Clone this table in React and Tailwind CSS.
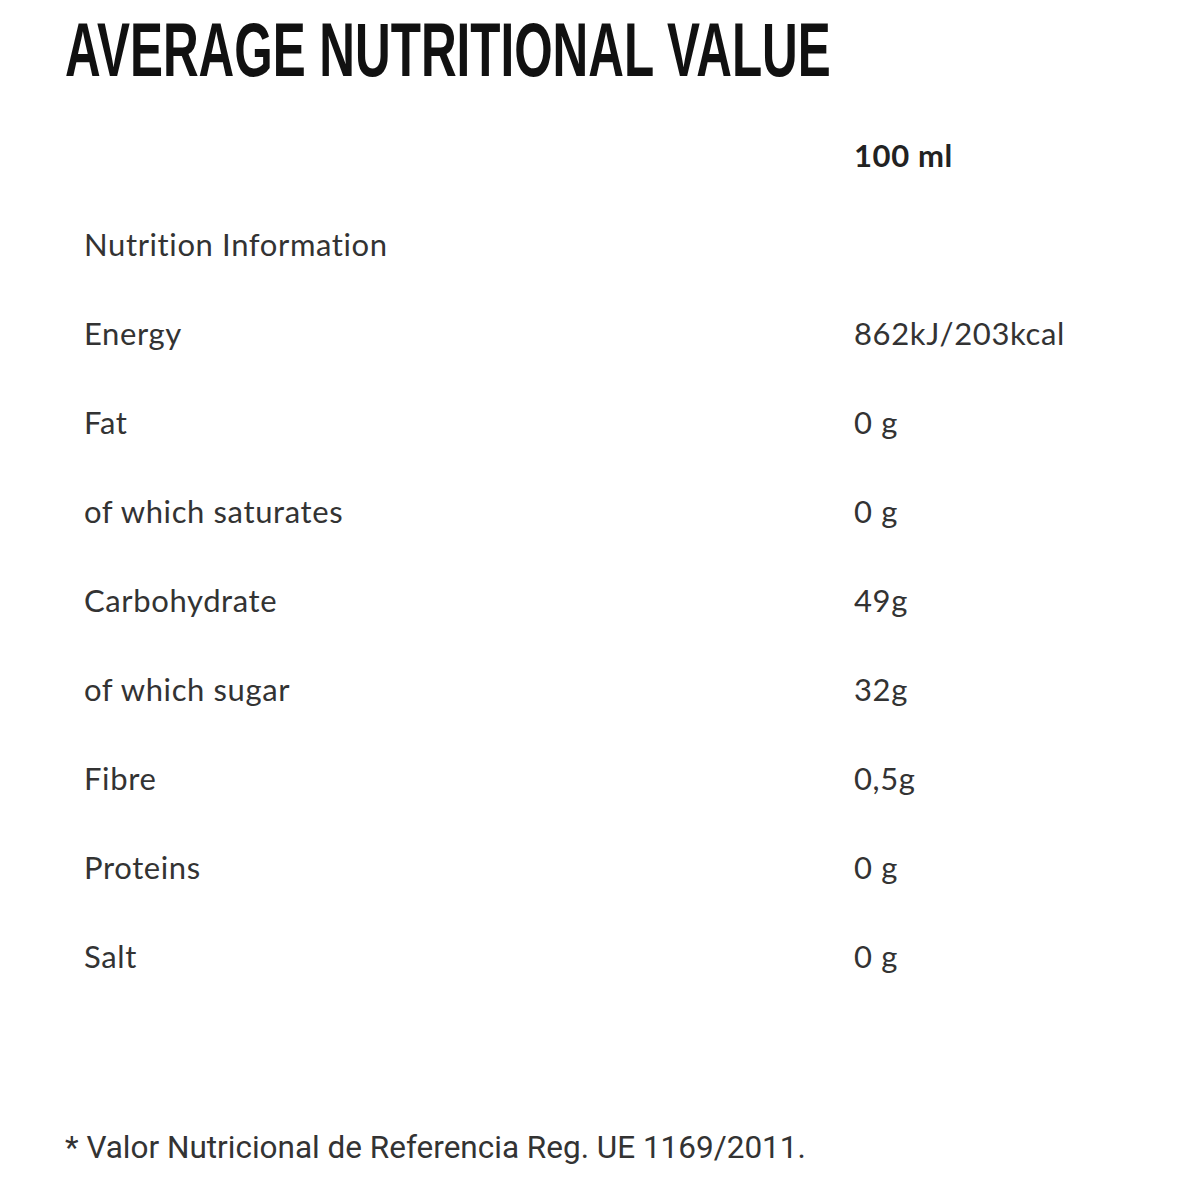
import React from 'react';

const rows = [
  ['Nutrition Information', ''],
  ['Energy', '862kJ/203kcal'],
  ['Fat', '0 g'],
  ['of which saturates', '0 g'],
  ['Carbohydrate', '49g'],
  ['of which sugar', '32g'],
  ['Fibre', '0,5g'],
  ['Proteins', '0 g'],
  ['Salt', '0 g'],
];

export default function App() {
  return (
    <div className="min-h-[1200px] w-[1200px] bg-white">
      <div className="pl-[65px] pt-[12px]">
        <h1 className="inline-block origin-left scale-x-[0.65] whitespace-nowrap font-['Liberation_Sans',sans-serif] text-[76px] font-bold leading-none text-[#111]">
          AVERAGE NUTRITIONAL VALUE
        </h1>
      </div>

      <div className="mt-[23px] pl-[84px] font-['Lato',sans-serif] text-[31px] tracking-[0.02em] text-[#333]">
        <div className="grid h-[89px] grid-cols-[770px_1fr] items-center">
          <span />
          <span className="font-bold text-[#222]">100 ml</span>
        </div>
        {rows.map(([label, value]) => (
          <div key={label} className="grid h-[89px] grid-cols-[770px_1fr] items-center">
            <span>{label}</span>
            <span>{value}</span>
          </div>
        ))}
      </div>

      <p className="mt-[131px] pl-[65px] font-['Roboto',sans-serif] text-[31.5px] leading-8 text-[#333]">
        * Valor Nutricional de Referencia Reg. UE 1169/2011.
      </p>
    </div>
  );
}
